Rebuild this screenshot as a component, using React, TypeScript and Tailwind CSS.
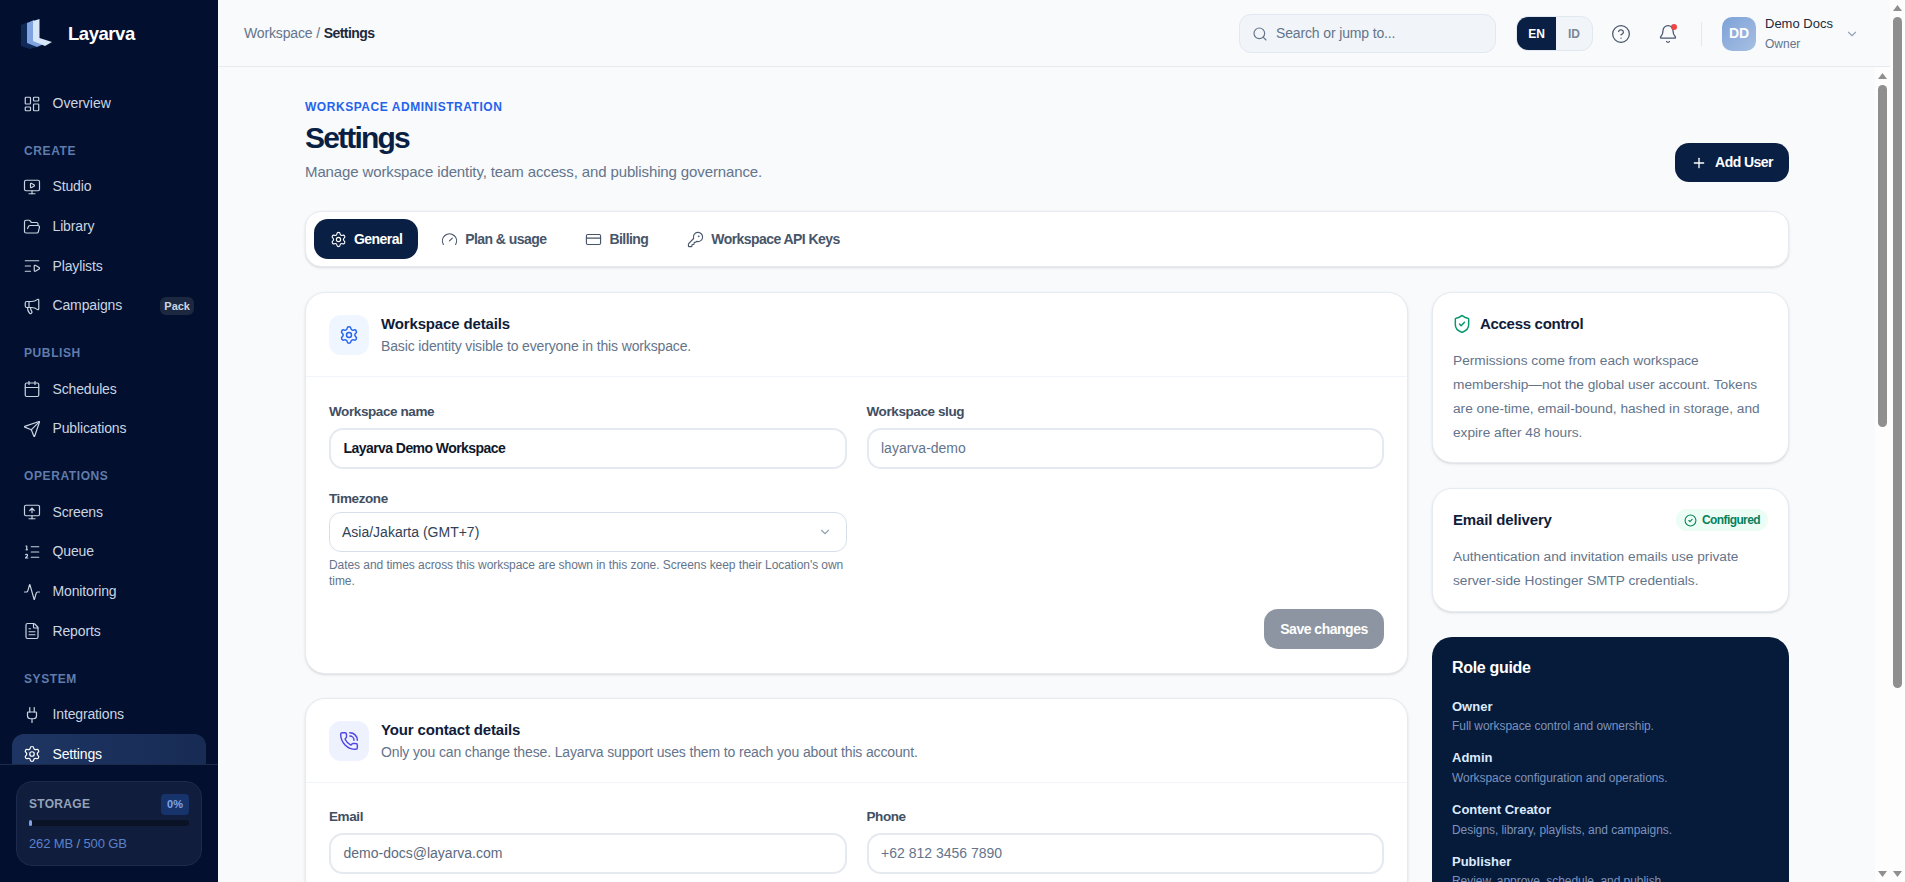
import {
  Activity,
  Bell,
  Calendar,
  ChevronDown,
  CircleCheck,
  CircleHelp,
  CreditCard,
  FileText,
  FolderOpen,
  Gauge,
  KeyRound,
  LayoutDashboard,
  ListOrdered,
  ListVideo,
  Megaphone,
  MonitorPlay,
  MonitorUp,
  PhoneCall,
  Plug,
  Plus,
  Search,
  Send,
  Settings,
  ShieldCheck,
} from "lucide-react"

const navGroups = [
  {
    title: "Create",
    items: [
      { label: "Studio", icon: MonitorPlay },
      { label: "Library", icon: FolderOpen },
      { label: "Playlists", icon: ListVideo },
      { label: "Campaigns", icon: Megaphone, badge: "Pack" },
    ],
  },
  {
    title: "Publish",
    items: [
      { label: "Schedules", icon: Calendar },
      { label: "Publications", icon: Send },
    ],
  },
  {
    title: "Operations",
    items: [
      { label: "Screens", icon: MonitorUp },
      { label: "Queue", icon: ListOrdered },
      { label: "Monitoring", icon: Activity },
      { label: "Reports", icon: FileText },
    ],
  },
  {
    title: "System",
    items: [
      { label: "Integrations", icon: Plug },
      { label: "Settings", icon: Settings, active: true },
    ],
  },
]

const tabs = [
  { label: "General", icon: Settings, active: true },
  { label: "Plan & usage", icon: Gauge },
  { label: "Billing", icon: CreditCard },
  { label: "Workspace API Keys", icon: KeyRound },
]

const roles = [
  { name: "Owner", desc: "Full workspace control and ownership." },
  { name: "Admin", desc: "Workspace configuration and operations." },
  { name: "Content Creator", desc: "Designs, library, playlists, and campaigns." },
  { name: "Publisher", desc: "Review, approve, schedule, and publish." },
]

function Logo() {
  return (
    <svg width="34" height="30" viewBox="0 0 34 30" fill="none">
      <path d="M1 6l7-3v21l9 4-7 2-9-3z" fill="#0f2a58" />
      <path d="M7 4l7-3v20l10 4-7 3-10-4z" fill="#7fa3e0" />
      <path d="M13 2l6.5-2v19l12.5 4-7 4-12-5z" fill="#d7e6f8" />
    </svg>
  )
}

// the browser's own scrollbars are not drawn in the capture, so these strips stand in for them
function ScrollStrip({ thumbClass, topClass }: { thumbClass: string; topClass: string }) {
  return (
    <div className={`flex w-[15px] shrink-0 flex-col items-center bg-[#fdfdfd] pb-[5px] ${topClass}`}>
      <svg width="9" height="6" viewBox="0 0 9 6">
        <path d="M4.5 0L9 6H0z" fill="#8f8f8f" />
      </svg>
      <div className={`mt-[6px] w-[9px] rounded-full bg-[#8f8f8f] ${thumbClass}`} />
      <svg className="mt-auto" width="9" height="6" viewBox="0 0 9 6">
        <path d="M4.5 6L0 0h9z" fill="#8f8f8f" />
      </svg>
    </div>
  )
}

function Sidebar() {
  return (
    <aside className="flex h-full w-[218px] shrink-0 flex-col bg-[#020f2e]">
      <div className="flex h-[67px] shrink-0 items-center gap-[14px] pl-[20px]">
        <Logo />
        <span className="pt-px text-[18.5px] font-bold tracking-tight text-white">Layarva</span>
      </div>

      <nav className="min-h-0 flex-1 overflow-hidden px-3 pt-[16.8px]">
        <a className="flex h-[39.7px] items-center gap-[11.5px] rounded-xl pl-[11px] text-[14px] text-[#cbd5e1]">
          <LayoutDashboard className="h-[18px] w-[18px]" strokeWidth={1.6} />
          Overview
        </a>
        {navGroups.map((group) => (
          <div key={group.title}>
            <div className="mt-[19.6px] mb-2 h-4 pl-3 text-[12px] leading-4 font-bold tracking-wider text-[#5f7cad] uppercase">
              {group.title}
            </div>
            {group.items.map((item) => (
              <a
                key={item.label}
                className={`flex h-[39.7px] items-center gap-[11.5px] rounded-xl pr-[12px] pl-[11px] text-[14px] ${
                  item.active
                    ? "bg-gradient-to-r from-[#1e3563] to-[#172b54] text-white"
                    : "text-[#cbd5e1]"
                }`}
              >
                <item.icon className="h-[18px] w-[18px] shrink-0" strokeWidth={1.6} />
                <span className="flex-1 tracking-[-0.01em]">{item.label}</span>
                {item.badge && (
                  <span className="flex h-[18px] items-center rounded-md bg-[#1c2740] px-[4px] text-[11px] font-bold text-[#cbd5e1]">
                    {item.badge}
                  </span>
                )}
              </a>
            ))}
          </div>
        ))}
      </nav>

      <div className="shrink-0 border-t border-[#1c2b4b] px-4 pt-4 pb-4">
        <div className="h-[85px] rounded-2xl border border-[#1b2a4d] bg-[#101d3d] px-3 pt-3">
          <div className="flex items-center justify-between">
            <span className="text-[12px] font-bold tracking-wide text-[#94a3b8]">STORAGE</span>
            <span className="rounded bg-[#17336b] px-1.5 py-0.5 text-[11px] font-bold text-[#7fa3e6]">0%</span>
          </div>
          <div className="mt-[5px] h-[6px] rounded-full bg-[#0a1326]">
            <div className="h-full w-[3px] rounded-full bg-[#7fa3e6]" />
          </div>
          <div className="mt-2 text-[13px] tracking-[-0.01em] text-[#5b82c9]">
            262 MB <span className="text-[#7d93bd]">/</span> 500 GB
          </div>
        </div>
      </div>
    </aside>
  )
}

function Topbar() {
  return (
    <header className="flex h-[67px] shrink-0 items-center border-b border-[#e6ebf2] bg-[#f8fafc] pt-px pr-[31px] pl-[26px]">
      <div className="flex-1 text-[14px] tracking-[-0.01em] text-[#64748b]">
        Workspace / <span className="font-semibold tracking-[-0.04em] text-[#1e293b]">Settings</span>
      </div>
      <div className="flex h-[39px] w-[257px] items-center gap-2 rounded-xl border border-[#e2e8f0] bg-[#f1f5f9] pl-3 text-[14px] tracking-[-0.01em] text-[#64748b]">
        <Search className="h-4 w-4" strokeWidth={1.75} />
        Search or jump to...
      </div>
      <div className="ml-5 flex h-[35px] w-[77px] overflow-hidden rounded-xl border border-[#e2e8f0] bg-[#f1f5f9] text-[12px] font-bold">
        <span className="flex w-[39px] items-center justify-center bg-[#0a1f44] text-white">EN</span>
        <span className="flex flex-1 items-center justify-center text-[#7b8797]">ID</span>
      </div>
      <CircleHelp className="ml-[18px] h-5 w-5 text-[#475569]" strokeWidth={1.5} />
      <div className="relative ml-[27px]">
        <Bell className="h-5 w-5 text-[#475569]" strokeWidth={1.5} />
        <span className="absolute top-0 right-[1px] h-[6px] w-[6px] rounded-full bg-[#ef4444]" />
      </div>
      <div className="mr-5 ml-[23px] h-6 w-px bg-[#e2e8f0]" />
      <div className="flex h-[34px] w-[34px] items-center justify-center rounded-[10px] bg-gradient-to-br from-[#7da2d8] to-[#a7bfe2] text-[14px] font-bold text-white">
        DD
      </div>
      <div className="ml-[9px] w-[74px]">
        <div className="text-[13px] leading-5 text-[#1e293b]">Demo Docs</div>
        <div className="text-[12px] leading-5 text-[#64748b]">Owner</div>
      </div>
      <ChevronDown className="ml-[6px] h-[14px] w-[14px] text-[#94a3b8]" />
    </header>
  )
}

function CardHeader({
  title,
  subtitle,
  icon: Icon,
  boxClass,
  iconClass,
}: {
  title: string
  subtitle: string
  icon: typeof Settings
  boxClass: string
  iconClass: string
}) {
  return (
    <div className="flex h-[84px] items-center gap-3 border-b border-[#f1f5f9] pr-6 pl-[23px]">
      <div className={`flex h-10 w-10 items-center justify-center rounded-xl ${boxClass}`}>
        <Icon className={`h-5 w-5 ${iconClass}`} strokeWidth={1.75} />
      </div>
      <div>
        <div className="text-[15px] leading-[22px] font-semibold tracking-[-0.01em] text-[#0f1c3a]">{title}</div>
        <div className="text-[14px] leading-[22px] tracking-[-0.01em] text-[#64748b]">{subtitle}</div>
      </div>
    </div>
  )
}

function TextField({ label, value, valueClass }: { label: string; value: string; valueClass: string }) {
  return (
    <div>
      <div className="mb-1.5 text-[13.5px] leading-5 font-semibold tracking-[-0.03em] text-[#414e62]">{label}</div>
      <div className={`flex h-[41px] items-center rounded-[14px] border-2 border-[#e5e9f0] px-[12.5px] text-[14px] ${valueClass}`}>
        {value}
      </div>
    </div>
  )
}

export default function App() {
  return (
    <div className="flex h-screen overflow-hidden bg-[#f8fafc] font-['Liberation_Sans',Arial,sans-serif]">
      <Sidebar />
      <div className="flex min-w-0 flex-1 flex-col">
        <Topbar />
        <div className="flex min-h-0 flex-1">
          <main className="min-w-0 flex-1 overflow-hidden">
            <div className="ml-[87px] w-[1484px] pt-8">
              <div className="flex items-end justify-between">
                <div>
                  <div className="text-[12px] leading-4 font-bold tracking-[0.045em] text-[#2563eb] uppercase">
                    Workspace Administration
                  </div>
                  <h1 className="mt-[5px] text-[30px] leading-9 font-semibold tracking-[-0.06em] text-[#0a1f44]">Settings</h1>
                  <p className="mt-1.5 text-[15px] leading-5 tracking-[-0.008em] text-[#64748b]">
                    Manage workspace identity, team access, and publishing governance.
                  </p>
                </div>
                <button className="flex h-[39px] w-[114px] items-center justify-center gap-2 rounded-[14px] bg-[#0a1f44] text-[14px] font-semibold tracking-[-0.04em] text-white">
                  <Plus className="h-4 w-4" />
                  Add User
                </button>
              </div>

              <div className="mt-[29px] flex h-14 items-center gap-[7px] rounded-2xl border border-[#e6ebf2] bg-white px-2 shadow-sm">
                {tabs.map((tab) => (
                  <div
                    key={tab.label}
                    className={`flex h-10 items-center gap-[7px] rounded-[14px] px-4 text-[14px] font-semibold tracking-[-0.04em] ${
                      tab.active ? "bg-[#0a1f44] text-white" : "text-[#475569]"
                    }`}
                  >
                    <tab.icon className="h-[17px] w-[17px]" strokeWidth={1.6} />
                    {tab.label}
                  </div>
                ))}
              </div>

              <div className="mt-[25px] grid grid-cols-[1fr_357px] gap-6">
                <div className="flex flex-col gap-6">
                  <section className="rounded-[20px] border border-[#e6ebf2] bg-white shadow-sm">
                    <CardHeader
                      title="Workspace details"
                      subtitle="Basic identity visible to everyone in this workspace."
                      icon={Settings}
                      boxClass="bg-[#eff6ff]"
                      iconClass="text-[#2563eb]"
                    />
                    <div className="pt-[25px] pr-[23px] pb-6 pl-[23px]">
                      <div className="grid grid-cols-2 gap-x-5 gap-y-5">
                        <TextField
                          label="Workspace name"
                          value="Layarva Demo Workspace"
                          valueClass="font-semibold tracking-[-0.04em] text-[#0f172a]"
                        />
                        <TextField label="Workspace slug" value="layarva-demo" valueClass="text-[#64748b]" />
                        <div>
                          <div className="mb-[3px] text-[13.5px] leading-5 font-semibold tracking-[-0.03em] text-[#414e62]">Timezone</div>
                          <div className="flex h-10 items-center justify-between rounded-xl border border-[#d9dfe8] pr-3.5 pl-3 text-[14px] text-[#334155]">
                            Asia/Jakarta (GMT+7)
                            <ChevronDown className="h-[14px] w-[14px] text-[#94a3b8]" />
                          </div>
                          <p className="mt-[5px] text-[12px] leading-4 tracking-[-0.005em] text-[#64748b]">
                            Dates and times across this workspace are shown in this zone. Screens keep their Location's own time.
                          </p>
                        </div>
                      </div>
                      <div className="mt-5 flex justify-end">
                        <button className="h-10 w-[120px] rounded-[14px] bg-[#8d95a2] text-[14px] font-semibold tracking-[-0.035em] text-white">
                          Save changes
                        </button>
                      </div>
                    </div>
                  </section>

                  <section className="rounded-[20px] border border-[#e6ebf2] bg-white shadow-sm">
                    <CardHeader
                      title="Your contact details"
                      subtitle="Only you can change these. Layarva support uses them to reach you about this account."
                      icon={PhoneCall}
                      boxClass="bg-[#eef2ff]"
                      iconClass="text-[#4f46e5]"
                    />
                    <div className="px-[23px] pt-6 pb-6">
                      <div className="grid grid-cols-2 gap-x-5">
                        <TextField label="Email" value="demo-docs@layarva.com" valueClass="font-medium text-[#5c6a80]" />
                        <TextField label="Phone" value="+62 812 3456 7890" valueClass="text-[#64748b]" />
                      </div>
                    </div>
                  </section>
                </div>

                <div className="flex flex-col gap-[25px]">
                  <section className="rounded-[20px] border border-[#e6ebf2] bg-white px-5 pt-5 pb-[17px] shadow-sm">
                    <div className="flex h-[22px] items-center gap-2">
                      <ShieldCheck className="-ml-px h-5 w-5 text-[#059669]" strokeWidth={1.75} />
                      <span className="text-[15px] font-semibold tracking-[-0.02em] text-[#0f1c3a]">Access control</span>
                    </div>
                    <p className="mt-[14px] text-[13.7px] leading-6 text-[#64748b]">
                      Permissions come from each workspace membership—not the global user account. Tokens are one-time, email-bound, hashed in storage, and expire after 48 hours.
                    </p>
                  </section>

                  <section className="rounded-[20px] border border-[#e6ebf2] bg-white px-5 pt-5 pb-[18px] shadow-sm">
                    <div className="flex items-center justify-between">
                      <span className="text-[15px] font-semibold tracking-[-0.01em] text-[#0f1c3a]">Email delivery</span>
                      <span className="flex h-[22px] items-center gap-[5px] rounded-full bg-[#ecfdf5] px-2 text-[12px] font-semibold tracking-[-0.05em] text-[#07805c]">
                        <CircleCheck className="h-[13px] w-[13px]" />
                        Configured
                      </span>
                    </div>
                    <p className="mt-[13px] text-[13.7px] leading-6 text-[#64748b]">
                      Authentication and invitation emails use private server-side Hostinger SMTP credentials.
                    </p>
                  </section>

                  <section className="rounded-[20px] bg-[#061a3a] p-5">
                    <div className="text-[16px] leading-[22px] font-semibold tracking-[-0.02em] text-white">Role guide</div>
                    <div className="mt-[19px] flex flex-col gap-[14.3px]">
                      {roles.map((role) => (
                        <div key={role.name}>
                          <div className="text-[13px] leading-[18px] font-semibold text-[#dbeafe]">{role.name}</div>
                          <div className="mt-[1.5px] text-[12px] leading-[18px] tracking-[-0.005em] text-[#7c93bd]">{role.desc}</div>
                        </div>
                      ))}
                    </div>
                  </section>
                </div>
              </div>
            </div>
          </main>
          <ScrollStrip topClass="pt-[6px]" thumbClass="h-[342px]" />
        </div>
      </div>
      <ScrollStrip topClass="pt-[5px]" thumbClass="h-[671px]" />
    </div>
  )
}
